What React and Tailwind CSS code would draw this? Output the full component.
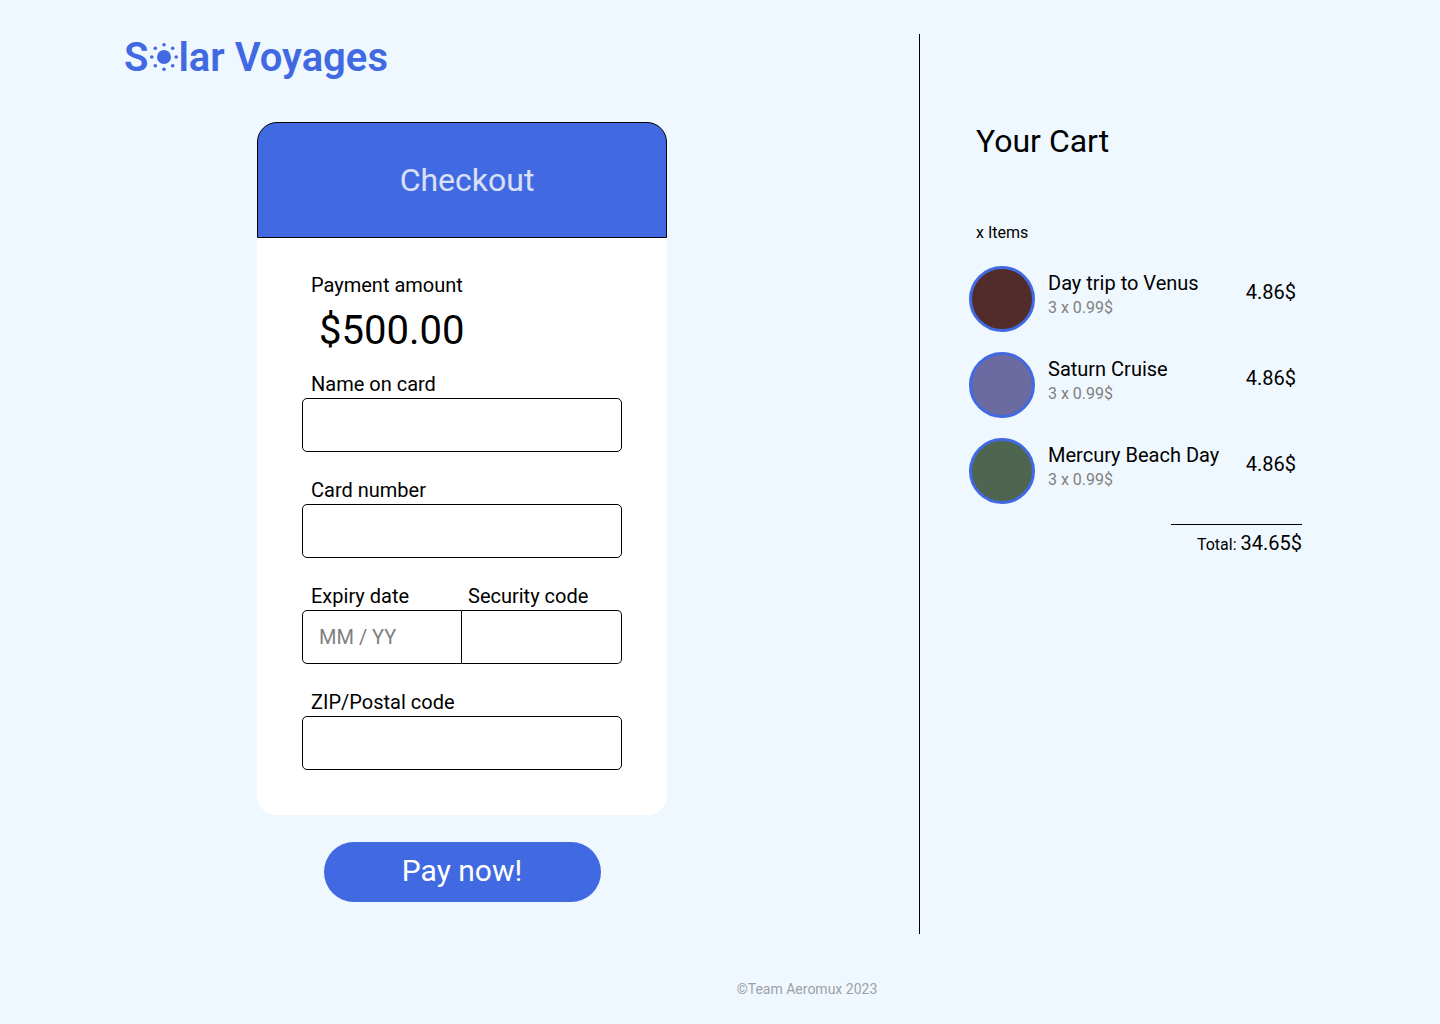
import React from "react";

const cartItems = [
  { name: "Day trip to Venus", detail: "3 x 0.99$", price: "4.86$", color: "bg-[#522b2b]" },
  { name: "Saturn Cruise", detail: "3 x 0.99$", price: "4.86$", color: "bg-[#6b6ba1]" },
  { name: "Mercury Beach Day", detail: "3 x 0.99$", price: "4.86$", color: "bg-[#4e6650]" },
];

function SunIcon() {
  return (
    <svg viewBox="-1 1 30 30" className="size-[30px] shrink-0" fill="currentColor" aria-hidden="true">
      <circle cx="15" cy="15" r="7" />
      <circle cx="15" cy="2.8" r="1.8" />
      <circle cx="15" cy="27.2" r="1.8" />
      <circle cx="2.8" cy="15" r="1.8" />
      <circle cx="27.2" cy="15" r="1.8" />
      <circle cx="6.3" cy="6.3" r="1.8" />
      <circle cx="23.7" cy="6.3" r="1.8" />
      <circle cx="6.3" cy="23.7" r="1.8" />
      <circle cx="23.7" cy="23.7" r="1.8" />
    </svg>
  );
}

function Logo() {
  return (
    <header className="flex h-12 items-center pl-31 text-[40px] leading-[48px] font-semibold text-[#4169e1]">
      <span>S</span>
      <SunIcon />
      <span>lar Voyages</span>
    </header>
  );
}

function Field({ id, label }) {
  return (
    <div className="flex flex-col">
      <label htmlFor={id} className="pl-[9px] text-xl">{label}</label>
      <input id={id} type="text" className="h-[54px] w-full rounded-[5px] border border-black bg-white px-4 text-xl outline-none" />
    </div>
  );
}

function CheckoutForm() {
  return (
    <form className="flex flex-col items-center gap-[27px] pl-[5px]" onSubmit={(e) => e.preventDefault()}>
      <div className="w-full max-w-[410px] rounded-[20px] bg-white">
        <h1 className="flex h-[116px] items-center justify-center rounded-t-[20px] border border-black bg-[#4169e1] pl-2.5 text-[32px] text-white/80">
          Checkout
        </h1>
        <div className="px-[45px] pt-[33px] pb-[45px]">
          <p className="pl-[9px] text-xl">Payment amount</p>
          <p className="mt-2 pl-[17px] text-[40px] leading-[48px]">$500.00</p>
          <div className="mt-[15px] flex flex-col gap-6">
            <Field id="name" label="Name on card" />
            <Field id="number" label="Card number" />
            <div className="grid grid-cols-2">
              <label htmlFor="expiry" className="pl-[9px] text-xl">Expiry date</label>
              <label htmlFor="security" className="pl-1.5 text-xl">Security code</label>
              <input
                id="expiry"
                type="text"
                placeholder="MM / YY"
                className="h-[54px] w-full min-w-0 rounded-l-[5px] border border-black bg-white px-4 text-xl outline-none placeholder:text-[#808080]"
              />
              <input
                id="security"
                type="text"
                className="h-[54px] w-full min-w-0 rounded-r-[5px] border border-l-0 border-black bg-white px-4 text-xl outline-none"
              />
            </div>
            <Field id="zip" label="ZIP/Postal code" />
          </div>
        </div>
      </div>
      <button type="submit" className="h-[60px] w-[277px] rounded-full bg-[#4169e1] pb-1 text-[30px] text-white">
        Pay now!
      </button>
    </form>
  );
}

function Cart() {
  return (
    <aside className="border-l border-black pt-[87px] pr-8 pl-[49px]">
      <h2 className="pl-[7px] text-[32px] leading-10">Your Cart</h2>
      <p className="mt-[60px] pl-[7px] text-base">x Items</p>
      <div className="max-w-[333px]">
        <ul className="mt-[21px] flex flex-col gap-5">
          {cartItems.map((item) => (
            <li key={item.name} className="flex h-[66px] pr-1.5">
              <span className={`size-[66px] shrink-0 rounded-full border-[3px] border-[#4169e1] ${item.color}`} />
              <div className="min-w-0 flex-1 pt-1 pl-[13px]">
                <p className="text-xl leading-[26px]">{item.name}</p>
                <p className="text-base leading-6 text-[#808080]">{item.detail}</p>
              </div>
              <p className="pt-3 text-xl">{item.price}</p>
            </li>
          ))}
        </ul>
        <div className="mt-5 ml-auto flex w-[131px] items-baseline justify-end gap-1 border-t border-black pt-1">
          <span className="text-base">Total:</span>
          <span className="text-xl">34.65$</span>
        </div>
      </div>
    </aside>
  );
}

export default function App() {
  return (
    <div className="flex min-h-screen flex-col bg-[#f0f8ff] pt-[34px] font-['Roboto',sans-serif] text-black">
      <div className="grid grid-cols-[919fr_521fr]">
        <main className="flex flex-col gap-10 pb-8">
          <Logo />
          <CheckoutForm />
        </main>
        <Cart />
      </div>
      <footer className="mt-[45px] pl-[174px] text-center text-sm text-[#9da1a5]">©Team Aeromux 2023</footer>
    </div>
  );
}
